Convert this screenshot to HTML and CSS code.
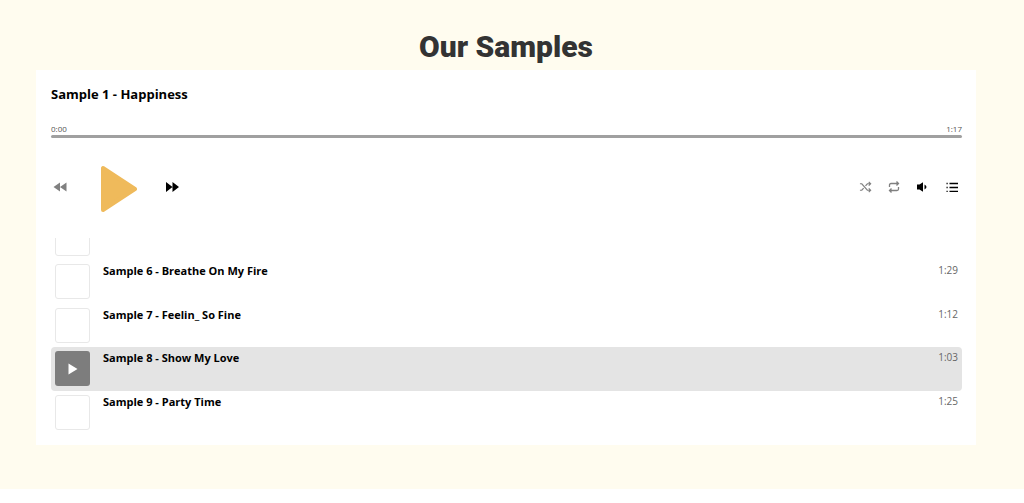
FILE: index.html
```
<!DOCTYPE html>
<html lang="en">

<head>
    <meta charset="utf-8">
    <title>Our Samples</title>
    <link rel="stylesheet" href="styles.css">
</head>

<body>
    <section class="samples">
        <h1>Our Samples</h1>
        <div class="player">
            <h2>Sample 1 - Happiness</h2>
            <div class="times">
                <span>0:00</span>
                <span>1:17</span>
            </div>
            <input class="seek" type="range" min="0" max="77" value="0" aria-label="Seek">

            <div class="controls">
                <button class="dim" aria-label="Previous"><svg width="14" height="10" viewBox="0 0 14 10"><path d="M7 .5v9L.5 5zM13.500 .5v9L7 5z"/></svg></button>
                <button class="play" aria-label="Play"><svg width="38" height="48" viewBox="0 0 38 48"><path d="M4 3v42l32-21z" stroke-width="4" stroke-linejoin="round"/></svg></button>
                <button aria-label="Next"><svg width="14" height="10" viewBox="0 0 14 10"><path d="M1 0v10L7.500 5zM7.500 0v10L14 5z"/></svg></button>
                <div class="options">
                    <button class="dim" aria-label="Shuffle"><svg class="line" width="14" height="12" viewBox="0 0 14 12"><path d="M1 2.500h2l6 7h3.500M1 9.500h2l2-2.300M7 4.800l2-2.300h3.500M10.500 .5l2 2-2 2M10.500 7.500l2 2-2 2"/></svg></button>
                    <button class="dim" aria-label="Repeat"><svg class="line" width="12" height="12" viewBox="0 0 12 12"><path d="M1.500 6V4q0-1.500 1.500-1.500h7.500M8.500 .5l2 2-2 2M10.500 6v2q0 1.500-1.500 1.500H1.500M3.500 7.500l-2 2 2 2"/></svg></button>
                    <button aria-label="Volume"><svg width="12" height="10" viewBox="0 0 12 10"><path d="M1 2.500h2.500L7 .3v9.400L3.500 7.500H1z"/><path d="M8.500 2.500q4 2.500 0 5z"/></svg></button>
                    <button class="list" aria-label="Playlist"><svg class="line" width="12" height="10" viewBox="0 0 12 10"><path d="M3.500 1.500H12M3.500 5.500H12M3.500 9.500H12M.5 1.500h1.200M.5 5.500h1.200M.5 9.500h1.200"/></svg></button>
                </div>
            </div>

            <div class="playlist">
                <ul>
                    <li><span class="cover"></span></li>
                    <li>
                        <span class="cover"></span>
                        <span class="name">Sample 6 - Breathe On My Fire</span>
                        <span class="length">1:29</span>
                    </li>
                    <li>
                        <span class="cover"></span>
                        <span class="name">Sample 7 - Feelin_ So Fine</span>
                        <span class="length">1:12</span>
                    </li>
                    <li class="active">
                        <button class="cover" aria-label="Play Sample 8"><svg width="10" height="12" viewBox="0 0 10 12"><path d="M.5 .5v11l9-5.500z"/></svg></button>
                        <span class="name">Sample 8 - Show My Love</span>
                        <span class="length">1:03</span>
                    </li>
                    <li>
                        <span class="cover"></span>
                        <span class="name">Sample 9 - Party Time</span>
                        <span class="length">1:25</span>
                    </li>
                </ul>
            </div>
        </div>
    </section>
</body>

</html>
```
FILE: styles.css
```
* {
    box-sizing: border-box;
}

body {
    margin: 0;
    background: white;
    font-family: "Open Sans", "Noto Sans", sans-serif;
}

.samples {
    background: #fffcef;
    padding: 29px 48px 44px 36px;
}

h1 {
    margin: 0;
    font-family: Roboto, sans-serif;
    font-size: 30px;
    font-weight: 900;
    line-height: 36px;
    color: #333;
    text-align: center;
    padding-bottom: 5px;
}

.player {
    background: white;
    padding: 14px 14px 11px 15px;
}

h2 {
    margin: 0;
    font-size: 13px;
    font-weight: 700;
    line-height: 20px;
    color: black;
}

.times {
    display: flex;
    justify-content: space-between;
    margin: 19px 0 1px;
    font-size: 8px;
    line-height: 11px;
    color: #555;
}

.seek {
    appearance: none;
    display: block;
    width: 100%;
    height: 3px;
    margin: 0;
    border-radius: 2px;
    background: #a0a0a0;
}

.seek::-webkit-slider-thumb {
    appearance: none;
    width: 0;
    height: 0;
}

button {
    display: flex;
    align-items: center;
    justify-content: center;
    padding: 0;
    border: 0;
    background: none;
    color: black;
}

svg {
    display: block;
    fill: currentColor;
}

.line {
    fill: none;
    stroke: currentColor;
    stroke-width: 1.3;
}

.dim {
    color: #808080;
}

.controls {
    display: flex;
    align-items: center;
    gap: 28px;
    height: 98px;
    margin-bottom: 2px;
    padding: 0 1px 0 2px;
}

.play {
    margin: 3px 0 0 4px;
    color: #efba5b;
}

.play svg {
    stroke: currentColor;
}

.options {
    display: flex;
    gap: 15px;
    margin-left: auto;
}

.options button {
    width: 13px;
}

.options .list {
    width: 18px;
}

.playlist {
    display: flex;
    flex-direction: column;
    justify-content: flex-end;
    height: 196px;
    overflow: hidden;
}

.playlist ul {
    display: grid;
    grid-auto-rows: 1fr;
    flex: none;
    height: 217px;
    margin: 0;
    padding: 0;
    list-style: none;
}

.playlist li {
    display: flex;
    padding: 4px;
    border-radius: 4px;
}

.playlist .active {
    background: #e4e4e4;
}

.cover {
    width: 35px;
    height: 35px;
    border: 1px solid #e8e8e8;
    border-radius: 3px;
}

.active .cover {
    border: 0;
    background: #7d7d7d;
    color: white;
}

.name {
    margin-left: 13px;
    font-size: 11px;
    font-weight: 700;
    line-height: 13px;
    color: black;
}

.length {
    margin-left: auto;
    font-size: 10px;
    line-height: 13px;
    color: #666;
}
```
